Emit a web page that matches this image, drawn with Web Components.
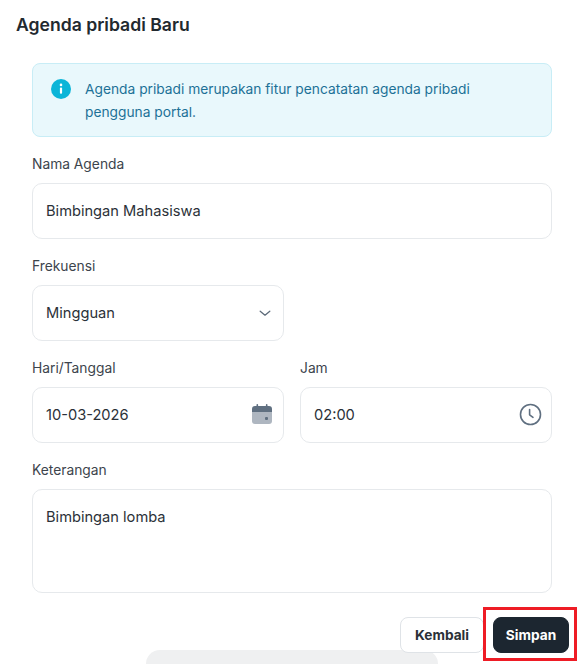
<!DOCTYPE html>
<html><head><meta charset="utf-8"><style>
html,body{margin:0;padding:0;background:#fff;height:664px;overflow:hidden;font-family:Inter,"Liberation Sans",sans-serif;color:#1f2933}
</style></head><body>
<template id="t-field"><style>
:host{display:block;min-width:0}
label{display:block;font-size:13.8px;line-height:20px;color:#3c444c;margin-bottom:9px}
.box{height:56px;box-sizing:border-box;border:1px solid #e6e9ec;border-radius:10px;display:flex;align-items:center;justify-content:space-between;padding:0 9px 0 13px;font-size:14.65px;color:#2b3138;background:#fff}
:host([area]) .box{height:104px;align-items:flex-start;padding-top:17px;line-height:20px}
::slotted(svg){flex:none}
</style><label></label><div class="box"><span class="v"></span><slot></slot></div></template>
<script>
class AppField extends HTMLElement{constructor(){super();this.attachShadow({mode:'open'}).appendChild(document.getElementById('t-field').content.cloneNode(true));}
connectedCallback(){const s=this.shadowRoot;s.querySelector('label').textContent=this.getAttribute('label');s.querySelector('.v').textContent=this.getAttribute('value');}}
customElements.define('app-field',AppField);
class AppAlert extends HTMLElement{constructor(){super();this.attachShadow({mode:'open'}).innerHTML=`<style>
:host{display:flex;gap:14px;box-sizing:border-box;height:74px;background:#e9f8fc;border:1px solid #c8edf6;border-radius:8px;padding:14px 32px 14px 18px;color:#1d7197;font-size:13.78px;line-height:23px}
svg{flex:none;margin-top:1px}
</style><svg width="20" height="20" viewBox="0 0 20 20"><circle cx="10" cy="10" r="10" fill="#0bb5d8"/><rect x="8.9" y="8.6" width="2.2" height="6.2" rx="1" fill="#fff"/><circle cx="10" cy="5.9" r="1.3" fill="#fff"/></svg><div><slot></slot></div>`}}
customElements.define('app-alert',AppAlert);
class AppButton extends HTMLElement{constructor(){super();this.attachShadow({mode:'open'}).innerHTML=`<style>
:host{display:flex;align-items:center;justify-content:center;box-sizing:border-box;height:36px;border-radius:8px;font-size:13.7px;font-weight:700;border:1px solid #dfe3e7;background:#fff;color:#2b3138;width:84px;position:relative;z-index:1}
:host([primary]){background:#1c2630;border-color:#1c2630;color:#fff;width:76px}
</style><slot></slot>`}}
customElements.define('app-button',AppButton);
class AgendaForm extends HTMLElement{constructor(){super();this.attachShadow({mode:'open'}).innerHTML=`<style>
:host{display:block;position:relative;height:664px;box-sizing:border-box;padding:15px 31px 0 32px;overflow:hidden}
h1{margin:0 0 0 -16px;font-size:17.6px;line-height:20px;font-weight:600;color:#22292f}
.stack{display:flex;flex-direction:column;gap:17px;margin-top:28px}
.two{display:grid;grid-template-columns:252px 252px;gap:16px}
.acts{display:flex;justify-content:flex-end;gap:9px;margin:24px -17px 0 0}
.toast{position:absolute;left:146px;top:650px;width:292px;height:40px;border-radius:14px;background:#eff0f1}
.mark{position:absolute;left:483px;top:607px;width:94px;height:54px;box-sizing:border-box;border:3px solid #ee1c25;z-index:2}
</style><h1><slot name="title"></slot></h1><div class="stack"><slot name="alert"></slot>
<slot name="name"></slot>
<div class="two"><slot name="freq"></slot></div>
<div class="two"><slot name="date"></slot><slot name="time"></slot></div>
<slot name="note"></slot></div>
<div class="acts"><slot name="acts"></slot></div><div class="toast"></div><div class="mark"></div>`}}
customElements.define('agenda-form',AgendaForm);
</script>
<agenda-form>
<span slot="title">Agenda pribadi Baru</span>
<app-alert slot="alert">Agenda pribadi merupakan fitur pencatatan agenda pribadi pengguna portal.</app-alert>
<app-field slot="name" label="Nama Agenda" value="Bimbingan Mahasiswa"></app-field>
<app-field slot="freq" label="Frekuensi" value="Mingguan"><svg width="14" height="14" viewBox="0 0 14 14" fill="none" stroke="#5d6b7a" stroke-width="1.3" stroke-linecap="round" stroke-linejoin="round" style="margin-right:2px"><path d="M2.2 5.2 7 9.2l4.8-4"/></svg></app-field>
<app-field slot="date" label="Hari/Tanggal" value="10-03-2026"><svg width="22" height="22" viewBox="0 0 22 22" style="margin:0 1px 2px 0"><path d="M1 8h20v10a3 3 0 0 1-3 3H4a3 3 0 0 1-3-3z" fill="#aeb6c0"/><path d="M1 9V6a3 3 0 0 1 3-3h1.5V1.8a.8.8 0 0 1 1.6 0V3h7.8V1.8a.8.8 0 0 1 1.6 0V3H18a3 3 0 0 1 3 3v3z" fill="#5f6f80"/><rect x="14" y="14" width="3" height="3" rx="1" fill="#5f6f80"/></svg></app-field>
<app-field slot="time" label="Jam" value="02:00"><svg width="23" height="23" viewBox="0 0 23 23" fill="none" stroke="#5f6f80" stroke-linecap="round" stroke-linejoin="round" style="margin-bottom:2px"><circle cx="11.5" cy="11.5" r="10" stroke-width="1.6"/><path d="M10.6 6.5v5.3l3.4 2.5" stroke-width="1.6"/></svg></app-field>
<app-field slot="note" area label="Keterangan" value="Bimbingan lomba"></app-field>
<app-button slot="acts">Kembali</app-button>
<app-button slot="acts" primary>Simpan</app-button>
</agenda-form>
</body></html>
